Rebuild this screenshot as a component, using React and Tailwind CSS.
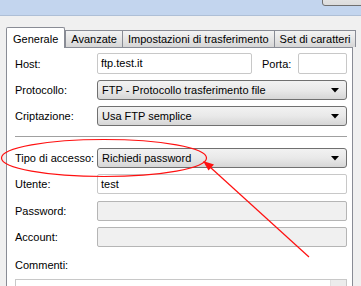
import React from 'react'

const FONT = { fontFamily: '"Liberation Sans", Arial, sans-serif' }

function Tab({ label, active }) {
  if (active) {
    return (
      <div className="relative z-10 -mb-px h-[21px] shrink-0 whitespace-nowrap rounded-t-[2px] border border-b-0 border-[#898c95] bg-white px-[6px] pt-[4px] text-black">
        {label}
      </div>
    )
  }
  return (
    <div className="-ml-px h-[17px] shrink-0 whitespace-nowrap border border-b-0 border-[#898c95] bg-linear-to-b from-[#f3f3f3] via-[#e6e6e6] to-[#d6d6d6] px-[5px] pt-[1px] text-black first:ml-0">
      {label}
    </div>
  )
}

function Select({ value }) {
  return (
    <div className="flex h-[20px] flex-1 items-center justify-between whitespace-nowrap rounded-[3px] border border-[#707070] bg-linear-to-b from-[#f2f2f2] via-[#e9e9e9] to-[#d6d6d6] pl-[4px] pr-[7px]">
      <span>{value}</span>
      <svg width="8" height="5" viewBox="0 0 8 5"><path d="M0 0h8L4 4.5z" fill="#000" /></svg>
    </div>
  )
}

function Input({ value, disabled, className = 'flex-1' }) {
  return (
    <div
      className={`h-[20px] rounded-[2px] border pl-[3px] pt-[2px] ${className} ${
        disabled ? 'border-[#b5b5b5] bg-[#f0f0f0]' : 'border-[#c8c8c8] bg-white'
      }`}
    >
      {value}
    </div>
  )
}

function Row({ label, children, className = '' }) {
  return (
    <div className={`flex items-center ${className}`}>
      <div className="w-[82px] shrink-0 whitespace-nowrap">{label}</div>
      {children}
    </div>
  )
}

export default function App() {
  return (
    <div className="relative h-[286px] w-[361px] overflow-hidden bg-[#f0f0f0] text-[11px] leading-[14px] text-black" style={FONT}>
      {/* top strip with clipped button edge */}
      <div className="flex h-[16px] justify-end border-b border-[#aebfd6] bg-[#c3d5ee]">
        <div className="-mt-[14px] mr-[-8px] h-[20px] w-[47px] rounded-[3px] border border-[#707070] bg-linear-to-b from-[#f2f2f2] to-[#dcdcdc]" />
      </div>

      <div className="pl-[6px] pt-[11px]">
        {/* tabs */}
        <div className="flex items-end">
          <Tab label="Generale" active />
          <div className="flex items-end">
            <Tab label="Avanzate" />
            <Tab label="Impostazioni di trasferimento" />
            <Tab label="Set di caratteri" />
          </div>
        </div>

        {/* panel */}
        <div className="h-[260px] w-[347px] border border-[#898c95] bg-white pl-[8px] pr-[5px] pt-[5px]">
          <Row label="Host:" className="h-[21px]">
            <Input value="ftp.test.it" className="h-[21px] w-[155px]" />
            <span className="ml-[10px] w-[36px] whitespace-nowrap">Porta:</span>
            <Input className="h-[21px] flex-1" />
          </Row>
          <Row label="Protocollo:" className="mt-[6px]">
            <Select value="FTP - Protocollo trasferimento file" />
          </Row>
          <Row label="Criptazione:" className="mt-[6px]">
            <Select value="Usa FTP semplice" />
          </Row>
          <div className="mt-[10px] h-px bg-[#a0a0a0]" />
          <Row label="Tipo di accesso:" className="mt-[11px]">
            <Select value="Richiedi password" />
          </Row>
          <Row label="Utente:" className="mt-[6px]">
            <Input value="test" />
          </Row>
          <Row label="Password:" className="mt-[7px]">
            <Input disabled />
          </Row>
          <Row label="Account:" className="mt-[6px]">
            <Input disabled />
          </Row>
          <div className="mt-[11px]">Commenti:</div>
          <div className="mt-[7px] flex h-[40px] justify-end border border-[#c8c8c8]">
            <div className="flex h-[16px] w-[16px] items-center justify-center border-b border-l border-[#e0e0e0] bg-[#ececec]">
              <svg width="7" height="4" viewBox="0 0 7 4"><path d="M3.5 0L7 4H0z" fill="#555" /></svg>
            </div>
          </div>
        </div>
      </div>

      {/* red annotation */}
      <svg className="pointer-events-none absolute left-0 top-0" width="361" height="286" viewBox="0 0 361 286">
        <ellipse cx="104" cy="158" rx="102.5" ry="18.5" fill="none" stroke="#ff1010" strokeWidth="1.2" />
        <line x1="309" y1="257" x2="210" y2="167" stroke="#ff1010" strokeWidth="1.2" />
        <path d="M203 161L214 164.5L208.5 170.5z" fill="#ff1010" />
      </svg>
    </div>
  )
}
